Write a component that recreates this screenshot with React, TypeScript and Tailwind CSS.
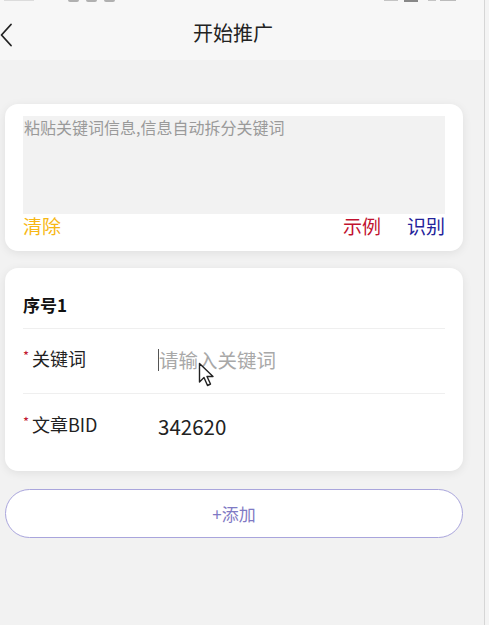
import React from "react";

export default function App() {
  const font = { fontFamily: '"Noto Sans CJK SC", "Noto Sans", sans-serif' };
  return (
    <div className="w-[489px] h-[625px] flex bg-[#f4f4f4] overflow-hidden" style={font}>
      <div className="relative w-[485px] h-full bg-[#f2f2f2] border-r border-[#d6d6d6] flex flex-col">
        {/* status bar remnants */}
        <div className="absolute z-10 top-0 left-0 w-full h-[3px] flex items-start">
          <div className="ml-[4px] w-[30px] h-[1px] bg-[#dcdcdc]" />
          <div className="ml-[34px] w-[11px] h-[2px] rounded-b bg-[#b0b0b0]" />
          <div className="ml-[7px] w-[11px] h-[2px] rounded-b bg-[#b0b0b0]" />
          <div className="ml-[7px] w-[11px] h-[2px] rounded-b bg-[#b0b0b0]" />
          <div className="ml-auto w-[14px] h-[1px] bg-[#c4c4c4]" />
          <div className="ml-[6px] w-[14px] h-[2px] bg-[#888]" />
          <div className="ml-[10px] w-[8px] h-[1px] bg-[#c4c4c4]" />
          <div className="ml-[4px] mr-[28px] w-[16px] h-[1px] bg-[#bbb]" />
        </div>
        {/* header */}
        <div className="relative h-[60px] bg-[#f7f7f7] flex items-center justify-center pt-[6px]">
          <svg className="absolute left-[0px] top-[23px]" width="14" height="24" viewBox="0 0 14 24">
            <path d="M11 1.5 L1.5 12 L11 22.5" fill="none" stroke="#222" strokeWidth="1.8" strokeLinecap="round" strokeLinejoin="round" />
          </svg>
          <div className="text-[20px] text-[#222] mr-[18px] leading-none">开始推广</div>
        </div>

        {/* card 1 */}
        <div className="mt-[44px] ml-[5px] w-[458px] bg-white rounded-[13px] shadow-[0_2px_10px_rgba(0,0,0,0.08)] px-[18px] pt-[12px] pb-[14px]">
          <div className="h-[98px] bg-[#f2f2f2] px-[1px] pt-[1px]">
            <div className="text-[16px] text-[#9a9a9a] leading-[20px]">粘贴关键词信息,信息自动拆分关键词</div>
          </div>
          <div className="flex items-center h-[24px] text-[19px] leading-none -mt-[1px]">
            <span className="text-[#f7b715]">清除</span>
            <span className="ml-auto text-[#c1122f]">示例</span>
            <span className="ml-[26px] text-[#23239a]">识别</span>
          </div>
        </div>

        {/* card 2 */}
        <div className="relative mt-[17px] ml-[5px] w-[458px] bg-white rounded-[13px] shadow-[0_2px_10px_rgba(0,0,0,0.08)] px-[18px]">
          <div className="h-[60px] flex items-center pt-[12px] text-[17px] font-bold text-[#111] leading-none">序号1</div>
          <div className="h-px bg-[#efefef]" />
          <div className="h-[64px] flex items-center">
            <div className="w-[135px] text-[18px] text-[#222] leading-none -mt-[6px] flex items-start">
              <span className="text-[#c1122f] text-[13px] w-[9px] leading-none">*</span>关键词
            </div>
            <div className="flex items-center -mt-[2px]">
              <div className="w-px h-[22px] bg-[#555]" />
              <span className="text-[19.5px] text-[#a8a8a8] leading-none">请输入关键词</span>
            </div>
          </div>
          <div className="h-px bg-[#efefef]" />
          <div className="h-[77px] flex items-start pt-[20px]">
            <div className="w-[135px] text-[18px] text-[#222] leading-none pt-[1px] flex items-start">
              <span className="text-[#c1122f] text-[13px] w-[9px] leading-none">*</span>文章BID
            </div>
            <span className="text-[20.5px] text-[#222] leading-none pt-[2px]">342620</span>
          </div>
          {/* mouse pointer */}
          <svg className="absolute left-[193px] top-[94px]" width="20" height="26" viewBox="0 0 20 26">
            <path d="M1.5 1.5 L1.5 20 L6 15.5 L9.5 23.5 L12.5 22 L9 14.5 L15 14.5 Z" fill="#fff" stroke="#222" strokeWidth="1.4" strokeLinejoin="round" />
          </svg>
        </div>

        {/* add button */}
        <div className="mt-[18px] ml-[5px] w-[458px] h-[49px] rounded-full bg-white border border-[#a9a5dc] flex items-center justify-center">
          <span className="text-[17px] text-[#7f7ac4] leading-none">+添加</span>
        </div>
      </div>
    </div>
  );
}
